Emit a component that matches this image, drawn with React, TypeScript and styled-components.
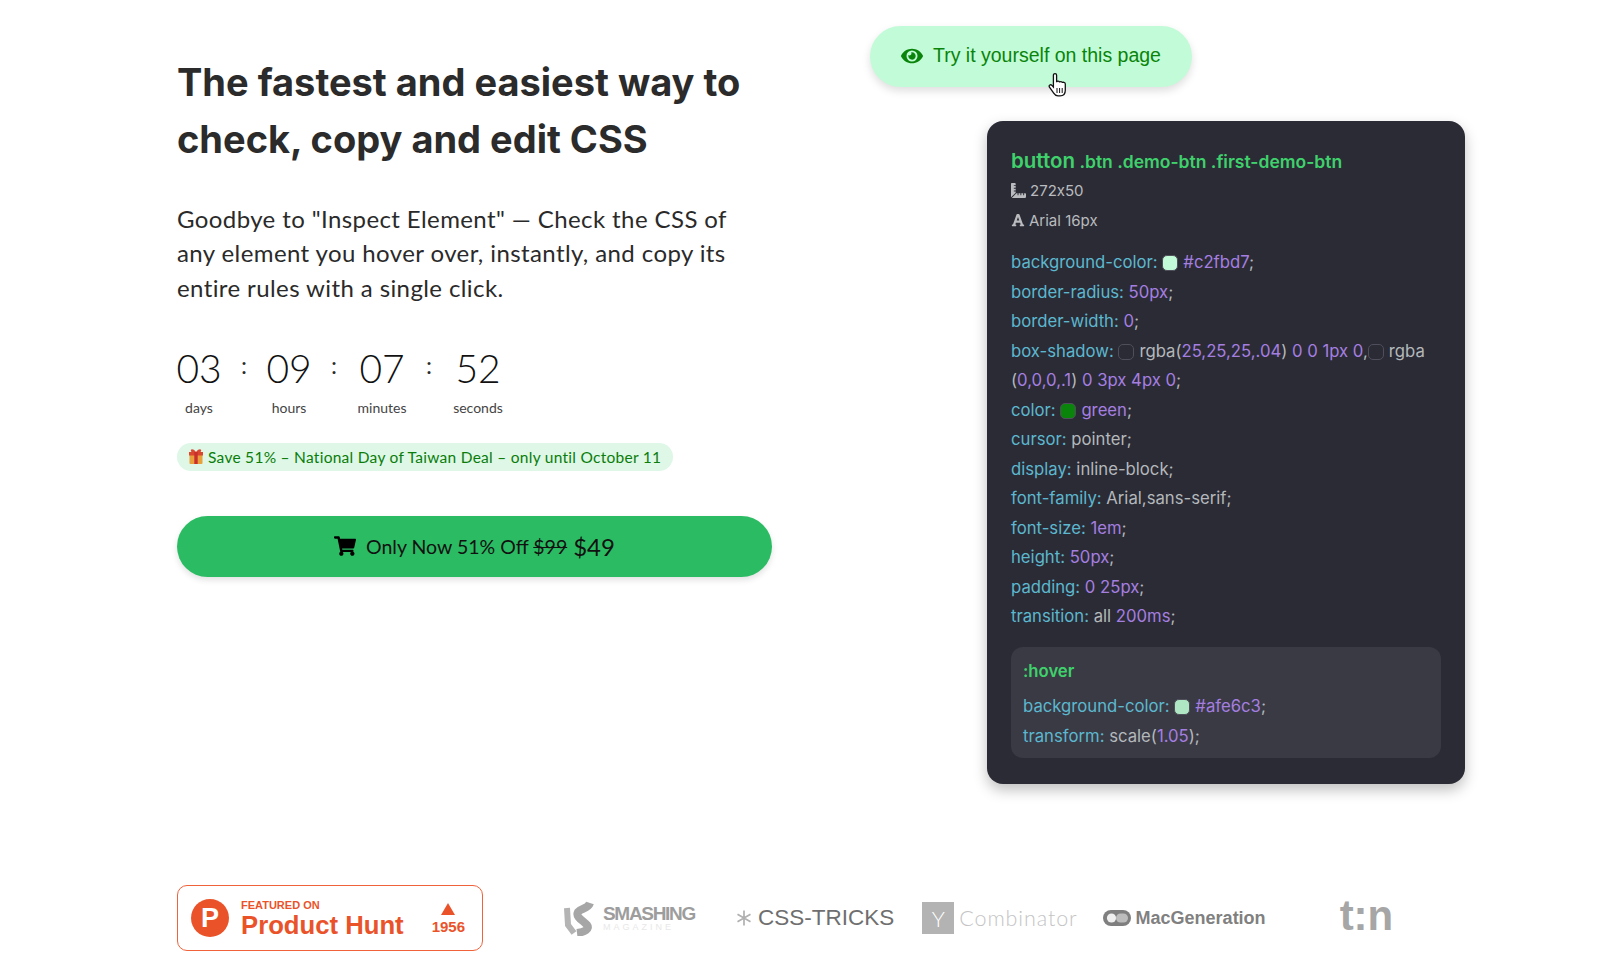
import { Fragment } from "react";
import styled, { createGlobalStyle } from "styled-components";
import { FaEye, FaFont, FaRulerCombined, FaShoppingCart } from "react-icons/fa";

const GlobalStyle = createGlobalStyle`
  html, body {
    margin: 0;
    padding: 0;
    background: #fff;
    font-family: "Lato", "Liberation Sans", sans-serif;
  }
`;

const Page = styled.div`
  width: 1600px;
  height: 968px;
  overflow: hidden;
  padding: 0 135px 0 177px;
  box-sizing: border-box;
  display: flex;
  flex-direction: column;
`;

const Top = styled.div`
  display: flex;
  justify-content: space-between;
  height: 885px;
`;

const Left = styled.div`
  width: 595px;
  padding-top: 54px;
`;

const Heading = styled.h1`
  margin: 0;
  font-family: "Inter", "Liberation Sans", sans-serif;
  font-size: 38px;
  line-height: 56.5px;
  font-weight: 700;
  color: #2b2b2b;
`;

const Lead = styled.p`
  margin: 35px 0 0;
  font-size: 24px;
  line-height: 34.3px;
  letter-spacing: 0.4px;
  font-weight: 400;
  color: #2a2a2a;
  width: 570px;
`;

const Countdown = styled.div`
  display: flex;
  margin-top: 40px;
`;

const Unit = styled.div<{ $width: number }>`
  width: ${({ $width }) => $width}px;
  display: flex;
  flex-direction: column;
  align-items: center;
`;

const Value = styled.div`
  font-size: 39px;
  line-height: 46px;
  font-weight: 300;
  color: #111;
`;

const UnitLabel = styled.div`
  font-size: 14px;
  line-height: 18px;
  margin-top: 8px;
  color: #444;
`;

const Colon = styled.div<{ $width: number }>`
  width: ${({ $width }) => $width}px;
  text-align: center;
  font-size: 24px;
  line-height: 40px;
  color: #2b2b2b;
`;

const Deal = styled.div`
  display: inline-flex;
  align-items: center;
  gap: 4px;
  margin-top: 26px;
  height: 28px;
  padding: 0 12px 0 11px;
  border-radius: 14px;
  background: #def7e7;
  color: #0a7d0a;
  font-size: 15.5px;
  letter-spacing: 0.27px;
`;

const Buy = styled.button`
  display: flex;
  align-items: center;
  justify-content: center;
  gap: 10px;
  width: 595px;
  height: 61px;
  margin-top: 45px;
  border: 0;
  border-radius: 31px;
  background: #2bbc63;
  box-shadow: 0 3px 6px rgba(0, 0, 0, 0.12);
  color: #111;
  font-family: inherit;
  font-size: 19.5px;
`;

const BuyText = styled.span`
  display: inline-flex;
  align-items: center;
  gap: 6px;
`;

const Price = styled.span`
  font-size: 24px;
`;

const Right = styled.div`
  width: 595px;
  display: flex;
  flex-direction: column;
  align-items: flex-end;
  padding-top: 26px;
`;

const DemoButton = styled.div`
  position: relative;
  align-self: flex-start;
  display: flex;
  align-items: center;
  gap: 10px;
  width: 322px;
  height: 61px;
  box-sizing: border-box;
  padding: 0 0 2px 31px;
  border-radius: 31px;
  background: #c2fbd7;
  box-shadow: 0 4px 8px rgba(0, 0, 0, 0.13);
  color: #0a840a;
  font-family: "Liberation Sans", Arial, sans-serif;
  font-size: 19.5px;
`;

const Cursor = styled.svg`
  position: absolute;
  left: 177px;
  top: 46px;
`;

const Panel = styled.div`
  width: 478px;
  height: 663px;
  margin-top: 34px;
  box-sizing: border-box;
  padding: 26px 24px 24px;
  border-radius: 16px;
  background: #2b2b36;
  box-shadow: 0 6px 14px rgba(0, 0, 0, 0.25);
  font-family: "Inter", "Liberation Sans", sans-serif;
  font-feature-settings: "calt" 0;
  font-size: 16.7px;
  line-height: 29.5px;
  color: #b4b8bb;
`;

const Title = styled.div`
  color: #3fd16b;
  font-weight: 600;
  font-size: 17.5px;
  line-height: 28px;
`;

const Tag = styled.span`
  font-size: 20.5px;
`;

const Meta = styled.div`
  display: flex;
  align-items: center;
  gap: 4px;
  font-size: 15px;
  color: #b9bbbe;
`;

const Rules = styled.div`
  margin-top: 13px;
`;

const Prop = styled.span`
  color: #5cb8cf;
`;

const Num = styled.span`
  color: #a57fe0;
`;

const Swatch = styled.span<{ $color: string }>`
  display: inline-block;
  width: 16px;
  height: 16px;
  margin-right: 5px;
  vertical-align: -3px;
  box-sizing: border-box;
  border-radius: 5px;
  border: 1px solid #4e4f5a;
  background: ${({ $color }) => $color};
`;

const HoverBox = styled.div`
  margin-top: 15px;
  padding: 10px 12px 7px;
  height: 111px;
  box-sizing: border-box;
  border-radius: 12px;
  background: #3a3a45;
`;

const HoverTitle = styled.div`
  color: #3fd16b;
  font-weight: 600;
  margin-bottom: 6px;
`;

const Logos = styled.div`
  display: flex;
  align-items: center;
  height: 66px;
`;

const Hunt = styled.div`
  display: flex;
  align-items: center;
  width: 306px;
  height: 66px;
  box-sizing: border-box;
  padding: 0 17px 0 13px;
  border: 1px solid #f0623a;
  border-radius: 10px;
  background: #fff;
  color: #ea532a;
  font-family: "Liberation Sans", Arial, sans-serif;
  font-weight: 700;
`;

const HuntDisc = styled.div`
  width: 38px;
  height: 38px;
  border-radius: 50%;
  background: #ea532a;
  color: #fff;
  font-size: 27px;
  line-height: 38px;
  text-align: center;
  margin-right: 12px;
`;

const HuntText = styled.div`
  flex: 1;
  padding-top: 4px;
`;

const Featured = styled.div`
  font-size: 11px;
  line-height: 11px;
`;

const HuntName = styled.div`
  font-size: 25.7px;
  line-height: 29px;
`;

const Votes = styled.div`
  display: flex;
  flex-direction: column;
  align-items: center;
  gap: 4px;
  font-size: 15px;
  line-height: 15px;
`;

const Arrow = styled.div`
  width: 0;
  height: 0;
  border-left: 7px solid transparent;
  border-right: 7px solid transparent;
  border-bottom: 12px solid #ea532a;
`;

const Press = styled.div<{
  $left: number;
  $color?: string;
  $size: number;
  $weight?: number;
  $font?: string;
  $lift?: number;
}>`
  display: flex;
  align-items: center;
  gap: 5px;
  margin-left: ${({ $left }) => $left}px;
  padding-bottom: ${({ $lift }) => $lift ?? 0}px;
  color: ${({ $color }) => $color ?? "#9d9d9d"};
  font-size: ${({ $size }) => $size}px;
  font-weight: ${({ $weight }) => $weight ?? 400};
  font-family: ${({ $font }) => $font ?? `"Liberation Sans", Arial`}, sans-serif;
  white-space: nowrap;
`;

const SmashStack = styled.div`
  display: flex;
  flex-direction: column;
  line-height: 1;
  letter-spacing: -1.3px;
`;

const SmashSub = styled.span`
  font-size: 9px;
  letter-spacing: 3px;
  color: #e8e8e8;
  font-weight: 400;
`;

const YBox = styled.span`
  display: flex;
  align-items: center;
  justify-content: center;
  width: 32px;
  height: 32px;
  background: #b3b3b3;
  color: #fff;
  font-size: 22px;
`;

const Spaced = styled.span`
  letter-spacing: 0.9px;
`;

const units = [
  ["03", "days", 44, 46],
  ["09", "hours", 44, 46],
  ["07", "minutes", 50, 44],
  ["52", "seconds", 54, 0],
] as const;

const GiftIcon = () => (
  <svg width="16" height="17" viewBox="0 0 16 17">
    <rect x="1.5" y="5" width="13" height="11" rx="1" fill="#e9a23b" />
    <rect x="1" y="4" width="14" height="3.5" fill="#d9472f" />
    <rect x="6.3" y="4" width="3.4" height="12" fill="#c9302c" />
    <path d="M8 4C5 0 2 1 3 3.4 3.6 4.4 6 4.2 8 4Zm0 0c3-4 6-3 5-.6C12.4 4.4 10 4.2 8 4Z" fill="#d9472f" />
  </svg>
);

const HandIcon = () => (
  <Cursor width="22" height="26" viewBox="0 0 22 26">
    <path
      d="M6.4 14.5V3.2c0-2.2 3.2-2.2 3.2 0v7c0-1.4 3-1.4 3 .3 0-1.4 2.9-1.3 2.9.5 0-1.2 2.8-1 2.8.9v6.4c0 3.4-2 5.6-5.2 5.6H11c-2 0-3.2-.9-4.3-2.7L2.3 15c-1-1.9 1.4-3 2.6-1.6l1.5 1.7Z"
      fill="#fff"
      stroke="#111"
      strokeWidth="1.3"
    />
    <path d="M10 16v5M12.6 16v5M15.2 16v5" stroke="#111" strokeWidth="1" />
  </Cursor>
);

const SmashIcon = () => (
  <svg width="35" height="36" viewBox="0 0 35 36">
    <path d="M4 8l1 17 6 8" stroke="#b4b4b4" strokeWidth="6" fill="none" />
    <path
      d="M27 3C25 9 18 8 15 12c-3 5 6 9 9 13 3 4-2 7-10 8"
      stroke="#a6a6a6"
      strokeWidth="8"
      fill="none"
    />
  </svg>
);

const StarIcon = () => (
  <svg width="18" height="18" viewBox="0 0 18 18">
    <path d="M9 1.5v15M2.5 5.2l13 7.6M15.5 5.2l-13 7.6" stroke="#b0b0b0" strokeWidth="1.7" />
  </svg>
);

const MacIcon = () => (
  <svg width="28" height="16" viewBox="0 0 28 16">
    <rect width="28" height="16" rx="8" fill="#7f7f7f" />
    <circle cx="8.5" cy="8" r="4.6" fill="#efefef" />
    <rect x="13" y="3.4" width="12" height="9.2" rx="4.6" fill="#bdbdbd" />
  </svg>
);

export default function App() {
  return (
    <Page>
      <GlobalStyle />
      <Top>
        <Left>
          <Heading>
            The fastest and easiest way to
            <br />
            check, copy and edit CSS
          </Heading>
          <Lead>
            Goodbye to "Inspect Element" — Check the CSS of any element you hover over, instantly, and
            copy its entire rules with a single click.
          </Lead>
          <Countdown>
            {units.map(([value, label, width, colon]) => (
              <Fragment key={label}>
                <Unit $width={width}>
                  <Value>{value}</Value>
                  <UnitLabel>{label}</UnitLabel>
                </Unit>
                {colon > 0 && <Colon $width={colon}>:</Colon>}
              </Fragment>
            ))}
          </Countdown>
          <Deal>
            <GiftIcon />
            Save 51% – National Day of Taiwan Deal – only until October 11
          </Deal>
          <Buy>
            <FaShoppingCart size={22} color="#000" />
            <BuyText>
              <span>
                Only Now 51% Off <s>$99</s>
              </span>
              <Price>$49</Price>
            </BuyText>
          </Buy>
        </Left>
        <Right>
          <DemoButton>
            <FaEye size={22} />
            Try it yourself on this page
            <HandIcon />
          </DemoButton>
          <Panel>
            <Title>
              <Tag>button</Tag> .btn .demo-btn .first-demo-btn
            </Title>
            <Meta>
              <FaRulerCombined size={15} /> 272x50
            </Meta>
            <Meta>
              <FaFont size={14} /> Arial 16px
            </Meta>
            <Rules>
              <div>
                <Prop>background-color:</Prop> <Swatch $color="#c2fbd7" />
                <Num>#c2fbd7</Num>;
              </div>
              <div>
                <Prop>border-radius:</Prop> <Num>50px</Num>;
              </div>
              <div>
                <Prop>border-width:</Prop> <Num>0</Num>;
              </div>
              <div>
                <Prop>box-shadow:</Prop> <Swatch $color="#2b2b36" />
                rgba(<Num>25,25,25,.04</Num>) <Num>0 0 1px 0</Num>,<Swatch $color="#2b2b36" />
                rgba
              </div>
              <div>
                (<Num>0,0,0,.1</Num>) <Num>0 3px 4px 0</Num>;
              </div>
              <div>
                <Prop>color:</Prop> <Swatch $color="#0a840a" />
                <Num>green</Num>;
              </div>
              <div>
                <Prop>cursor:</Prop> pointer;
              </div>
              <div>
                <Prop>display:</Prop> inline-block;
              </div>
              <div>
                <Prop>font-family:</Prop> Arial,sans-serif;
              </div>
              <div>
                <Prop>font-size:</Prop> <Num>1em</Num>;
              </div>
              <div>
                <Prop>height:</Prop> <Num>50px</Num>;
              </div>
              <div>
                <Prop>padding:</Prop> <Num>0 25px</Num>;
              </div>
              <div>
                <Prop>transition:</Prop> all <Num>200ms</Num>;
              </div>
            </Rules>
            <HoverBox>
              <HoverTitle>:hover</HoverTitle>
              <div>
                <Prop>background-color:</Prop> <Swatch $color="#afe6c3" />
                <Num>#afe6c3</Num>;
              </div>
              <div>
                <Prop>transform:</Prop> scale(<Num>1.05</Num>);
              </div>
            </HoverBox>
          </Panel>
        </Right>
      </Top>
      <Logos>
        <Hunt>
          <HuntDisc>P</HuntDisc>
          <HuntText>
            <Featured>FEATURED ON</Featured>
            <HuntName>Product Hunt</HuntName>
          </HuntText>
          <Votes>
            <Arrow />
            1956
          </Votes>
        </Hunt>
        <Press $left={80} $size={19} $weight={700}>
          <SmashIcon />
          <SmashStack>
            SMASHING
            <SmashSub>MAGAZINE</SmashSub>
          </SmashStack>
        </Press>
        <Press $left={40} $size={22.5} $color="#6f6f6f">
          <StarIcon />
          CSS-TRICKS
        </Press>
        <Press $left={28} $size={21.5} $color="#c4c4c4" $font="Lato" $weight={300}>
          <YBox>Y</YBox>
          <Spaced>Combinator</Spaced>
        </Press>
        <Press $left={25} $size={18} $weight={700} $color="#808080">
          <MacIcon />
          MacGeneration
        </Press>
        <Press $left={74} $size={42} $weight={700} $color="#a6a6a6" $lift={4}>
          t:n
        </Press>
      </Logos>
    </Page>
  );
}
